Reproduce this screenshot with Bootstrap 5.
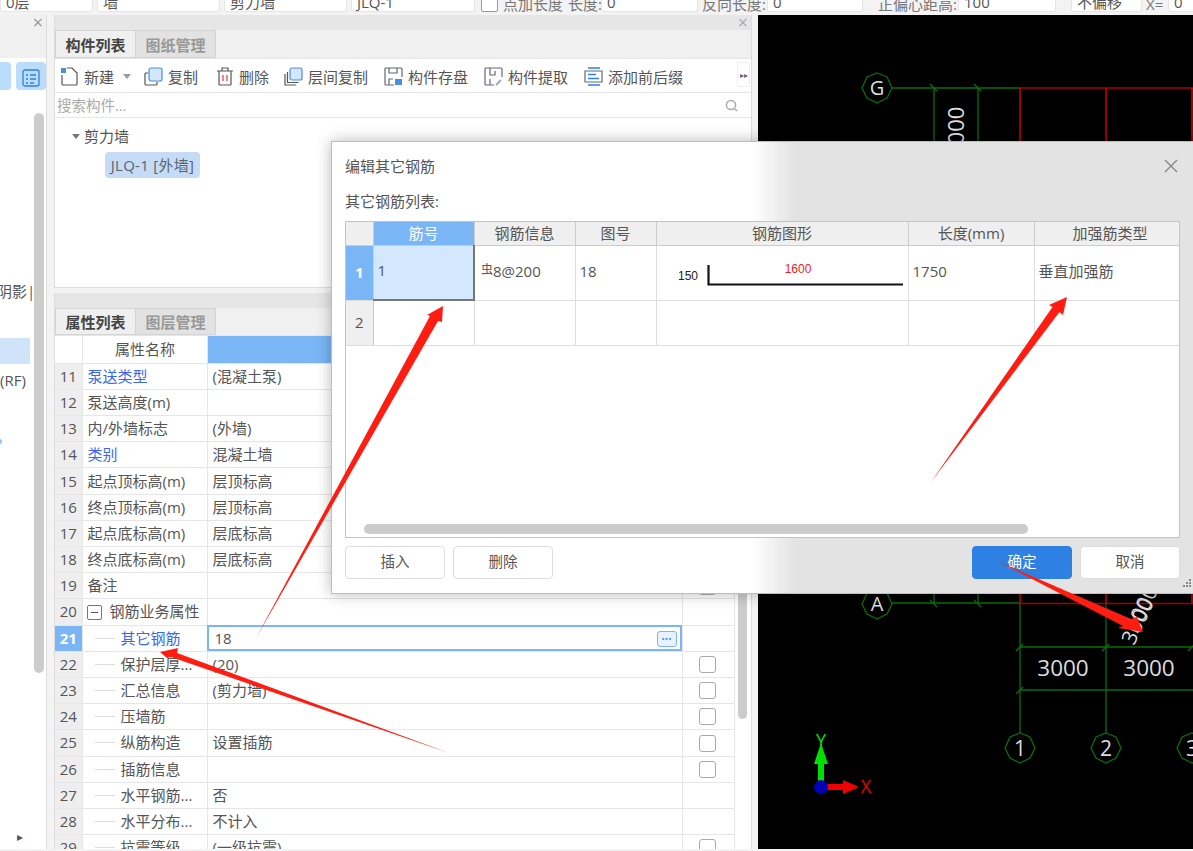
<!DOCTYPE html>
<html lang="zh">
<head>
    <meta charset="UTF-8">
    <title>编辑其它钢筋</title>
    <link rel="stylesheet" href="https://cdn.jsdelivr.net/npm/bootstrap@5.3.0/dist/css/bootstrap.min.css">
    <style>
        html, body { margin: 0; height: 851px; overflow: hidden; }
        body { width: 1193px; position: relative; background: #f3f3f3; color: #555; font-size: 15px; line-height: 1.2; font-family: "Open Sans", "Noto Sans CJK SC", sans-serif; }

        /* top option strip, cut off by the crop */
        .opt-strip { height: 15px; overflow: hidden; align-items: flex-end; padding-bottom: 3px; background: #f3f3f3; font-size: 15px; }
        .opt-field { height: 12px; flex: none; background: #fff; border-radius: 0 0 3px 3px; border: 1px solid #e6e6e6; border-top: 0; padding: 0 5px; line-height: 5px; }
        .opt-check { width: 17px; height: 14px; flex: none; margin-left: 6px; border: 1px solid #999; border-radius: 2px; background: #fff; }
        .opt-label { flex: none; line-height: 15px; height: 15px; color: #777; white-space: nowrap; overflow: hidden; padding-bottom: 0; margin-bottom: 0; }

        .work-row { height: 834px; }
        .side-col { width: 47px; flex: none; background: #fff; margin-right: 7px; position: relative; overflow: hidden; border-right: 1px solid #ddd; }
        .side-band { height: 43px; background: #f0f0f0; position: relative; }
        .side-close { position: absolute; right: 0; top: 0; width: 16px; text-align: center; color: #999; font-size: 18px; line-height: 15px; }
        .side-tool { height: 28px; width: 30px; background: #bcdcfb; border-radius: 4px; margin: 4px 0 0 16px; padding: 5px 6px; }
        .side-tool-cut { position: absolute; left: -18px; top: 47px; width: 29px; height: 28px; background: #bcdcfb; border-radius: 4px; }
        .side-scroll { position: absolute; left: 34px; top: 98px; width: 10px; height: 560px; background: #ccc; border-radius: 5px; }
        .side-text { position: absolute; left: 0; white-space: nowrap; }
        .side-hit { position: absolute; left: 0; top: 323px; width: 30px; height: 26px; background: #cfe3f9; }
        .side-dot { position: absolute; left: -2px; top: 424px; width: 4px; height: 5px; border-radius: 50%; background: #8cc8f5; }

        .mid-col { width: 698px; flex: none; }
        .pane-top { height: 273px; background: #fff; border: 1px solid #ddd; border-top: 0; margin-bottom: 5px; position: relative; overflow: hidden; }
        .pane-bottom { height: 556px; background: #fff; border-right: 1px solid #ddd; border-left: 1px solid #ddd; position: relative; overflow: hidden; }
        .pane-band { height: 15px; background: #e6e6e6; position: relative; }
        .pane-close { position: absolute; right: 3px; top: 0; font-size: 18px; color: #aaa; line-height: 15px; }
        .tab-row { height: 29px; background: #f0f0f0; border-bottom: 1px solid #e6e6e6; }
        .tab-row.is-low { height: 28px; }
        .pane-tab { width: 81px; height: 28px; text-align: center; line-height: 28px; font-size: 15px; border: 1px solid #d4d4d4; }
        .is-low .pane-tab { height: 27px; line-height: 26px; }
        .pane-tab.is-on { background: #efefef; color: #444; font-weight: 700; }
        .pane-tab.is-off { background: #e2e2e2; color: #999; font-weight: 700; margin-left: -1px; }

        .tool-row { height: 34px; border-bottom: 1px solid #e6e6e6; position: relative; padding: 2px 0 0 5px; }
        .tool-item { gap: 5px; flex: none; white-space: nowrap; color: #555; }
        .tool-item svg { flex: none; }
        .tool-more { position: absolute; right: 1px; top: 3px; width: 13px; height: 25px; border: 1px solid #eee; border-radius: 3px; font-size: 8px; line-height: 23px; text-align: center; color: #666; }
        .tree-caret { border: 4px solid transparent; border-top: 5px solid #777; border-bottom: 0; margin-right: 4px; }
        .search-row { height: 25px; border-bottom: 1px solid #e6e6e6; padding: 1px 13px 0 2px; color: #aaa; font-size: 14.500px; }
        .tree-root { padding: 9px 0 0 17px; color: #555; }
        .tree-node { margin: 7px 0 0 50px; width: 95px; height: 26px; background: #c6dcf6; border-radius: 4px; line-height: 26px; text-align: center; color: #5a6470; white-space: nowrap; letter-spacing: .3px; }

        /* property grid */
        .prop-wrap { width: 679px; }
        .prop-scroll { position: absolute; right: 4px; top: 28px; width: 9px; height: 398px; background: #ccc; border-radius: 5px; }
        .prop-grid { table-layout: fixed; width: 679px; margin: 0; border-collapse: collapse; }
        .prop-grid td, .prop-grid th { height: 26.2px; padding: 0 4px 0 5px; border: 1px solid #e6e6e6; border-width: 0 1px 1px 0; font-weight: 400; color: #555; white-space: nowrap; overflow: hidden; vertical-align: middle; line-height: 1; background: #fff; box-shadow: none; }
        .prop-grid thead th { height: 27.200px; }
        .prop-grid .cell-no { background: #eee; text-align: center; padding: 0; font-size: 15px; color: #555; }
        .prop-grid .cell-no.is-on { background: #7ab6f5; color: #fff; font-weight: 700; }
        .prop-grid .cell-head-on { background: #7ab6f5; }
        .prop-grid .cell-link { color: #3a66ee; }
        .prop-grid .cell-edit { position: relative; outline: 2px solid #7ab6f5; outline-offset: -2px; padding-left: 7px; }
        .prop-grid .cell-check { text-align: center; padding: 0 1px 0 0; }
        .sub-name { display: flex; align-items: center; padding-left: 7px; }
        .sub-name::before { content: ""; width: 20px; height: 1px; background: #ddd; margin-right: 6px; flex: none; }
        .plus-box { display: inline-block; width: 15px; height: 15px; border: 1px solid #777; border-radius: 2px; margin: 0 8px 0 -1px; position: relative; vertical-align: middle; }
        .plus-box::after { content: ""; position: absolute; left: 3px; right: 3px; top: 6px; height: 1px; background: #555; }
        .ck-box { display: inline-block; width: 17px; height: 17px; border: 1px solid #aaa; border-radius: 3px; vertical-align: middle; }
        .more-btn { position: absolute; right: 5px; top: 5px; width: 20px; height: 16px; border: 1px solid #7ab6f5; border-radius: 3px; background: #e8f2fd; color: #4a90e2; font-size: 9px; line-height: 14px; text-align: center; }

        /* CAD canvas */
        .cad-view { width: 435px; margin-left: 6px; flex: none; background: #000; position: relative; }
        .cad-view svg { position: absolute; left: 0; top: 0; }

        /* dialog */
        .rebar-dlg { position: absolute; left: 331px; top: 141px; width: 870px; height: 453px; padding: 0 13px 0 13px; border: 1px solid #bdbdbd; box-shadow: 0 0 14px rgba(0, 0, 0, .28); background: linear-gradient(to right, #fff 420px, #e3e3e3 462px); }
        .dlg-title { font-size: 15px; padding-top: 15px; height: 46px; color: #555; line-height: 18px; }
        .dlg-close { position: absolute; left: 831px; top: 16px; }
        .dlg-sub { height: 33px; padding-top: 5px; font-size: 15px; color: #555; line-height: 16px; }
        .rebar-box { width: 835px; height: 317px; background: #fff; border: 1px solid #c4c4c4; position: relative; overflow: hidden; }
        .rebar-grid { table-layout: fixed; width: 834px; margin: 0; border-collapse: collapse; }
        .rebar-grid th, .rebar-grid td { padding: 0 4px; border: 1px solid #ddd; border-width: 0 1px 1px 0; color: #555; font-weight: 400; vertical-align: middle; background: #fff; box-shadow: none; line-height: 1; font-size: 15px; }
        .rebar-grid th { height: 23px; background: #efefef; text-align: center; border-color: #ccc; }
        .rebar-grid th:last-child { padding-left: 10px; }
        .rebar-grid .row-a { height: 55px; }
        .rebar-grid .row-a td { padding-bottom: 3px; }
        .rebar-grid .row-b { height: 45px; }
        .rebar-grid .cell-no { background: #efefef; text-align: center; padding: 0; font-size: 15px; border-right-color: #ccc; }
        .rebar-grid th.is-on { background: #7ab6f5; color: #fff; }
        .rebar-grid td.is-on { background: #7ab6f5; color: #fff; font-weight: 700; padding: 0; }
        .rebar-grid .cell-picked { background: #d3e8fd; border-right: 2px solid #777; border-bottom: 2px solid #777; }
        .steel-mark { font-size: 12px; position: relative; top: -3px; margin-left: 2px; }
        .rebar-thumb { left: 18px; bottom: 3px; width: 664px; height: 10px; background: #ccc; border-radius: 5px; }
        .dlg-foot { width: 835px; height: 33px; margin-top: 8px; }
        .dlg-btn { width: 100px; height: 33px; padding: 0; font-size: 14.500px; background: #fff; border: 1px solid #ddd; color: #555; border-radius: 4px; line-height: 1; }
        .dlg-btn.is-main { background: #2f80e3; border-color: #2f80e3; color: #fff; }
        .dlg-grip { position: absolute; left: 850px; top: 436px; }

        .mark-layer { position: absolute; left: 0; top: 0; pointer-events: none; }
        .page-end { height: 2px; background: #f3f3f3; }
    </style>
</head>
<body>
    <div class="opt-strip d-flex">
        <div class="opt-field" style="width:93px">0层</div>
        <div class="opt-field ms-1" style="width:123px">墙</div>
        <div class="opt-field ms-1" style="width:123px">剪力墙</div>
        <div class="opt-field ms-1" style="width:124px">JLQ-1</div>
        <div class="opt-check"></div>
        <div class="opt-label" style="margin-left:5px;width:60px">点加长度</div>
        <div class="opt-label" style="margin-left:5px;width:33px">长度:</div>
        <div class="opt-field" style="width:97px">0</div>
        <div class="opt-label" style="margin-left:4px;width:65px">反向长度:</div>
        <div class="opt-field" style="width:96px">0</div>
        <div class="opt-label" style="margin-left:15px;width:80px">正偏心距高:</div>
        <div class="opt-field" style="width:98px">100</div>
        <div class="opt-field" style="width:71px;margin-left:15px">不偏移</div>
        <div class="opt-label" style="margin-left:4px;width:22px">X=</div>
        <div class="opt-field" style="width:40px">0</div>
    </div>

    <div class="work-row d-flex">
        <!-- left panel, mostly off screen -->
        <div class="side-col">
            <div class="side-band"><span class="side-close">×</span></div>
            <div class="side-tool-cut"></div>
            <div class="side-tool">
                <svg width="18" height="18" viewBox="0 0 18 18" fill="none" stroke="#2f80e3" stroke-width="1.3"><rect x="1" y="1" width="16" height="16" rx="2"/><path d="M4 6h2M8 6h6M4 10h2M8 10h6M4 14h2M8 14h4"/></svg>
            </div>
            <div class="side-scroll"></div>
            <div class="side-text" style="top:267px;left:-3px">阴影|</div>
            <div class="side-hit"></div>
            <div class="side-text" style="top:356px">(RF)</div>
            <div class="side-dot"></div>
            <div class="side-text" style="top:815px;left:17px;font-size:12px;color:#555">▸</div>
        </div>

        <div class="mid-col">
            <!-- component list -->
            <div class="pane-top">
                <div class="pane-band"><span class="pane-close">×</span></div>
                <div class="tab-row d-flex">
                    <div class="pane-tab is-on">构件列表</div>
                    <div class="pane-tab is-off">图纸管理</div>
                </div>
                <div class="tool-row d-flex align-items-center">
                    <div class="tool-item d-flex align-items-center">
                        <svg width="19" height="19" viewBox="0 0 19 19" fill="none" stroke="#555" stroke-width="1.2"><path d="M2 8v9a1 1 0 0 0 1 1h13a1 1 0 0 0 1-1V6l-5-5H7"/><rect x="1" y="1" width="5" height="5" fill="#4a90e2" stroke="none"/></svg>
                        <span>新建</span>
                    </div>
                    <span class="tree-caret" style="margin:0 0 0 9px;border-top-color:#999"></span>
                    <div class="tool-item d-flex align-items-center" style="margin-left:13px">
                        <svg width="19" height="19" viewBox="0 0 19 19" fill="none" stroke="#555" stroke-width="1.2"><path d="M4 6H2a1 1 0 0 0-1 1v10a1 1 0 0 0 1 1h10a1 1 0 0 0 1-1v-2"/><rect x="5" y="1" width="13" height="13" rx="2" fill="#d3e8fd" stroke="#4a90e2"/></svg>
                        <span>复制</span>
                    </div>
                    <div class="tool-item d-flex align-items-center" style="margin-left:18px">
                        <svg width="18" height="19" viewBox="0 0 18 19" fill="none" stroke="#555" stroke-width="1.2"><path d="M1 4h16M6 4V1h6v3M3 4v13a1 1 0 0 0 1 1h10a1 1 0 0 0 1-1V4"/><path d="M7 8v6M11 8v6" stroke="#e33"/></svg>
                        <span>删除</span>
                    </div>
                    <div class="tool-item d-flex align-items-center" style="margin-left:15px">
                        <svg width="19" height="19" viewBox="0 0 19 19" fill="none" stroke="#555" stroke-width="1.2"><path d="M1 7v11h11M3.500 5v10.500h11"/><rect x="6" y="1" width="12" height="12" rx="2" fill="#d3e8fd" stroke="#4a90e2"/></svg>
                        <span>层间复制</span>
                    </div>
                    <div class="tool-item d-flex align-items-center" style="margin-left:16px">
                        <svg width="19" height="19" viewBox="0 0 19 19" fill="none" stroke="#667" stroke-width="1.2"><path d="M10 18H2a1 1 0 0 1-1-1V2a1 1 0 0 1 1-1h15a1 1 0 0 1 1 1v8"/><path d="M5 1v5h8V1M5 18v-6h4"/><rect x="11" y="12" width="7" height="6" fill="#4a90e2" stroke="none"/></svg>
                        <span>构件存盘</span>
                    </div>
                    <div class="tool-item d-flex align-items-center" style="margin-left:16px">
                        <svg width="19" height="19" viewBox="0 0 19 19" fill="none" stroke="#667" stroke-width="1.2"><path d="M10 18H2a1 1 0 0 1-1-1V2a1 1 0 0 1 1-1h15a1 1 0 0 1 1 1v8"/><path d="M6 1v7h5V4M6 18v-6"/><path d="M12 18l5-5" stroke="#9ab" stroke-width="2"/></svg>
                        <span>构件提取</span>
                    </div>
                    <div class="tool-item d-flex align-items-center" style="margin-left:16px">
                        <svg width="19" height="19" viewBox="0 0 19 19" fill="none" stroke="#667" stroke-width="1.2"><path d="M1 4h17v11H1z"/><path d="M4 1h12M4 18h12M4 7.500h8M4 11.500h11" stroke="#2f80e3" stroke-width="1.400"/></svg>
                        <span>添加前后缀</span>
                    </div>
                    <div class="tool-more">▸▸</div>
                </div>
                <div class="search-row d-flex align-items-center justify-content-between">
                    <span>搜索构件...</span>
                    <svg width="13" height="13" viewBox="0 0 13 13" fill="none" stroke="#aaa" stroke-width="1.5"><circle cx="6" cy="6" r="4.600"/><path d="M9.500 9.500L12 12"/></svg>
                </div>
                <div class="tree-root d-flex align-items-center"><span class="tree-caret"></span>剪力墙</div>
                <div class="tree-node">JLQ-1 [外墙]</div>
            </div>

            <!-- property list -->
            <div class="pane-bottom">
                <div class="pane-band"></div>
                <div class="tab-row is-low d-flex">
                    <div class="pane-tab is-on">属性列表</div>
                    <div class="pane-tab is-off">图层管理</div>
                </div>
                <div class="prop-wrap">
                    <table class="table prop-grid">
                        <colgroup><col style="width:27px"><col style="width:125px"><col style="width:475px"><col style="width:52px"></colgroup>
                        <thead><tr><th></th><th class="text-center">属性名称</th><th class="cell-head-on"></th><th></th></tr></thead>
                        <tbody id="propRows"></tbody>
                    </table>
                </div>
                <div class="prop-scroll"></div>
            </div>
        </div>

        <div class="cad-view">
            <svg width="435" height="834" viewBox="758 15 435 834" fill="none" stroke-width="1.3">
                <g stroke="#0b6d0b">
                    <polygon points="877,73 887,77 892,88 887,98 877,103 867,98 862,88 867,77"/>
                    <polygon points="877,589 887,593 892,604 887,614 877,619 867,614 862,604 867,593"/>
                    <polygon points="1020,733 1030,737 1035,748 1030,758 1020,763 1010,758 1005,748 1010,737"/>
                    <polygon points="1106,733 1116,737 1121,748 1116,758 1106,763 1096,758 1091,748 1096,737"/>
                    <polygon points="1192,733 1202,737 1207,748 1202,758 1192,763 1182,758 1177,748 1182,737"/>
                    <path d="M892 88H1020M892 603H1020M934 88V603M978 88V603M930 84l7 7M974 84l7 7M930 600l7 7M974 600l7 7"/>
                    <path d="M1020 603V733M1106 603V733M1020 647H1193M1020 690H1193M1016 651l7-7M1102 651l7-7M1016 694l7-7M1188 651l7-7"/>
                </g>
                <path d="M1020 88H1193M1020 603.500H1193" stroke="#a80000"/>
                <path d="M1020 88V603M1106 88V603M1192 88V603" stroke="#f00000"/>
                <g fill="#ddd" stroke="none" font-family="Open Sans, sans-serif">
                    <text x="877" y="95" font-size="20" text-anchor="middle">G</text>
                    <text x="877" y="611" font-size="20" text-anchor="middle">A</text>
                    <text x="1020" y="756" font-size="21" text-anchor="middle">1</text>
                    <text x="1106" y="756" font-size="21" text-anchor="middle">2</text>
                    <text x="1192" y="756" font-size="21" text-anchor="middle">3</text>
                    <text x="1063" y="676" font-size="22.500" text-anchor="middle">3000</text>
                    <text x="1149" y="676" font-size="22.500" text-anchor="middle">3000</text>
                    <text transform="translate(964 157) rotate(-90)" font-size="22">3000</text>
                    <text transform="translate(1134 646) rotate(-65)" font-size="21">3000</text>
                    <text transform="translate(1138 634) rotate(-65)" font-size="21">3000</text>
                </g>
                <path d="M821 787V757" stroke="#00e000" stroke-width="6"/>
                <polygon points="821,743 828,764 814,764" fill="#00e000"/>
                <path d="M821 787H846" stroke="#f00000" stroke-width="6"/>
                <polygon points="859,787 843,780 843,794" fill="#f00000"/>
                <circle cx="821" cy="787" r="7" fill="#0000b4"/>
                <g stroke="none" font-family="Open Sans, sans-serif" font-size="18">
                    <text x="821" y="747" fill="#00e000" text-anchor="middle">Y</text>
                    <text x="866" y="793" fill="#f00000" text-anchor="middle">X</text>
                </g>
            </svg>
        </div>
    </div>
    <div class="page-end"></div>

    <!-- edit dialog -->
    <div class="rebar-dlg">
        <div class="dlg-title">编辑其它钢筋</div>
        <svg class="dlg-close" width="16" height="16" viewBox="0 0 16 16" fill="none" stroke="#888" stroke-width="1.400"><path d="M2 2l12 12M14 2L2 14"/></svg>
        <div class="dlg-sub">其它钢筋列表:</div>
        <div class="rebar-box">
            <table class="table rebar-grid">
                <colgroup><col style="width:27px"><col style="width:101px"><col style="width:101px"><col style="width:81px"><col style="width:252px"><col style="width:126px"><col style="width:146px"></colgroup>
                <thead>
                    <tr><th></th><th class="is-on">筋号</th><th>钢筋信息</th><th>图号</th><th>钢筋图形</th><th>长度(mm)</th><th>加强筋类型</th></tr>
                </thead>
                <tbody>
                    <tr class="row-a">
                        <td class="cell-no is-on">1</td>
                        <td class="cell-picked">1</td>
                        <td><span class="steel-mark">虫</span>8@200</td>
                        <td>18</td>
                        <td class="p-0">
                            <svg class="d-block" width="251" height="54" viewBox="0 0 251 54" fill="none">
                                <text x="21" y="34" fill="#222" font-size="12" font-family="Liberation Sans, sans-serif">150</text>
                                <path d="M51.500 19V38.500H246" stroke="#111" stroke-width="2.200"/>
                                <text x="141" y="27" fill="#f02020" font-size="12" text-anchor="middle" font-family="Liberation Sans, sans-serif">1600</text>
                            </svg>
                        </td>
                        <td>1750</td>
                        <td>垂直加强筋</td>
                    </tr>
                    <tr class="row-b"><td class="cell-no">2</td><td></td><td></td><td></td><td></td><td></td><td></td></tr>
                </tbody>
            </table>
            <div class="rebar-thumb position-absolute"></div>
        </div>
        <div class="dlg-foot d-flex justify-content-between">
            <div class="d-flex gap-2">
                <button class="btn dlg-btn">插入</button>
                <button class="btn dlg-btn">删除</button>
            </div>
            <div class="d-flex gap-2">
                <button class="btn dlg-btn is-main">确定</button>
                <button class="btn dlg-btn">取消</button>
            </div>
        </div>
        <svg class="dlg-grip" width="10" height="10" viewBox="0 0 10 10" fill="#888"><rect x="7" y="1" width="2" height="2"/><rect x="4" y="4" width="2" height="2"/><rect x="7" y="4" width="2" height="2"/><rect x="1" y="7" width="2" height="2"/><rect x="4" y="7" width="2" height="2"/><rect x="7" y="7" width="2" height="2"/></svg>
    </div>

    <!-- red callout arrows drawn over the screenshot -->
    <svg class="mark-layer" width="1193" height="851" viewBox="0 0 1193 851" fill="#ff1d12">
        <polygon points="256,638 430,316 427,315 443,306 442,322 438,321"/>
        <polygon points="931,482 1052.500,307 1049,305 1067,297 1063,315 1059.500,312"/>
        <polygon points="449,753 177,653 178,648 160,652 167,658 171,657"/>
        <polygon points="997,561 1123,626 1118,628 1143,632 1137,617 1131,619"/>
    </svg>

    <script>
        // property rows: [no, name, value, kind, has checkbox]
        const props = [
            [11, '泵送类型', '(混凝土泵)', 'link', 0], [12, '泵送高度(m)', '', '', 0], [13, '内/外墙标志', '(外墙)', '', 0],
            [14, '类别', '混凝土墙', 'link', 0], [15, '起点顶标高(m)', '层顶标高', '', 0], [16, '终点顶标高(m)', '层顶标高', '', 0],
            [17, '起点底标高(m)', '层底标高', '', 0], [18, '终点底标高(m)', '层底标高', '', 0], [19, '备注', '', '', 1],
            [20, '钢筋业务属性', '', 'group', 0], [21, '其它钢筋', '18', 'edit', 0], [22, '保护层厚...', '(20)', 'sub', 1],
            [23, '汇总信息', '(剪力墙)', 'sub', 1], [24, '压墙筋', '', 'sub', 1], [25, '纵筋构造', '设置插筋', 'sub', 1],
            [26, '插筋信息', '', 'sub', 1], [27, '水平钢筋...', '否', 'sub', 0], [28, '水平分布...', '不计入', 'sub', 0],
            [29, '抗震等级', '(一级抗震)', 'sub', 1]
        ];
        document.getElementById('propRows').innerHTML = props.map(([no, name, value, kind, check]) => {
            let nameCell = `<td>${name}</td>`;
            if (kind === 'link') nameCell = `<td class="cell-link">${name}</td>`;
            if (kind === 'group') nameCell = `<td><span class="plus-box"></span>${name}</td>`;
            if (kind === 'sub') nameCell = `<td><div class="sub-name">${name}</div></td>`;
            if (kind === 'edit') nameCell = `<td class="cell-link"><div class="sub-name">${name}</div></td>`;
            const valueCell = kind === 'edit'
                ? `<td class="cell-edit">${value}<span class="more-btn">•••</span></td>`
                : `<td>${value}</td>`;
            return `<tr><td class="cell-no${kind === 'edit' ? ' is-on' : ''}">${no}</td>${nameCell}${valueCell}<td class="cell-check">${check ? '<span class="ck-box"></span>' : ''}</td></tr>`;
        }).join('');
    </script>
    <script src="https://cdn.jsdelivr.net/npm/bootstrap@5.3.0/dist/js/bootstrap.bundle.min.js"></script>
</body>
</html>
